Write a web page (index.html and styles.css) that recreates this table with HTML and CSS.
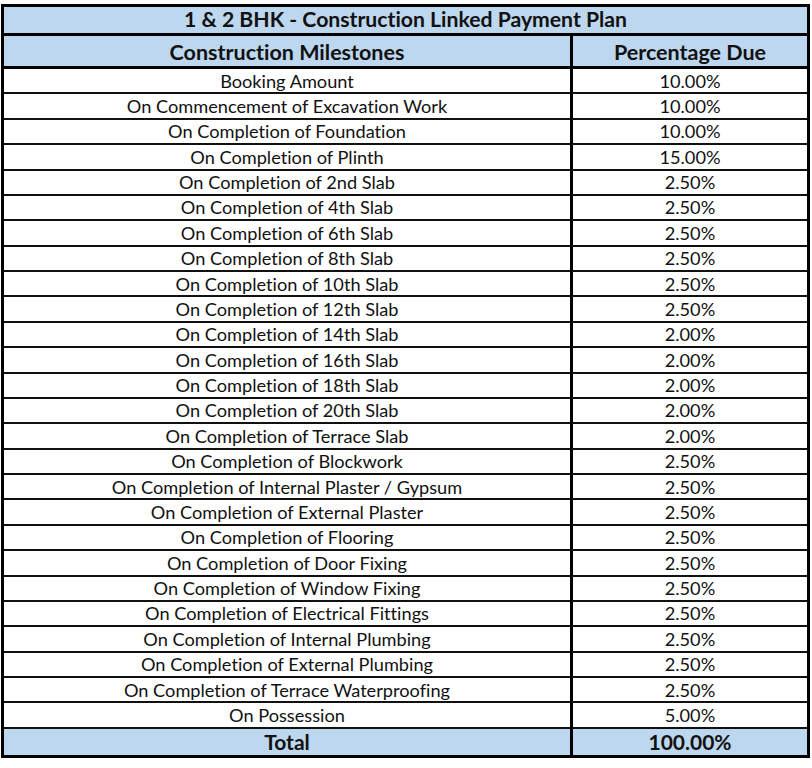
FILE: index.html
```html
<!DOCTYPE html>
<html lang="en">
<head>
<meta charset="utf-8">
<title>1 &amp; 2 BHK - Construction Linked Payment Plan</title>
<link rel="stylesheet" href="styles.css">
</head>
<body>
<table class="plan">
  <colgroup><col class="col-milestone"><col class="col-pct"></colgroup>
  <thead>
    <tr class="title-row"><th colspan="2">1 &amp; 2 BHK - Construction Linked Payment Plan</th></tr>
    <tr class="head-row"><th>Construction Milestones</th><th class="pct">Percentage Due</th></tr>
  </thead>
  <tbody>
    <tr><td>Booking Amount</td><td class="pct">10.00%</td></tr>
    <tr><td>On Commencement of Excavation Work</td><td class="pct">10.00%</td></tr>
    <tr><td>On Completion of Foundation</td><td class="pct">10.00%</td></tr>
    <tr><td>On Completion of Plinth</td><td class="pct">15.00%</td></tr>
    <tr><td>On Completion of 2nd Slab</td><td class="pct">2.50%</td></tr>
    <tr><td>On Completion of 4th Slab</td><td class="pct">2.50%</td></tr>
    <tr><td>On Completion of 6th Slab</td><td class="pct">2.50%</td></tr>
    <tr><td>On Completion of 8th Slab</td><td class="pct">2.50%</td></tr>
    <tr><td>On Completion of 10th Slab</td><td class="pct">2.50%</td></tr>
    <tr><td>On Completion of 12th Slab</td><td class="pct">2.50%</td></tr>
    <tr><td>On Completion of 14th Slab</td><td class="pct">2.00%</td></tr>
    <tr><td>On Completion of 16th Slab</td><td class="pct">2.00%</td></tr>
    <tr><td>On Completion of 18th Slab</td><td class="pct">2.00%</td></tr>
    <tr><td>On Completion of 20th Slab</td><td class="pct">2.00%</td></tr>
    <tr><td>On Completion of Terrace Slab</td><td class="pct">2.00%</td></tr>
    <tr><td>On Completion of Blockwork</td><td class="pct">2.50%</td></tr>
    <tr><td>On Completion of Internal Plaster / Gypsum</td><td class="pct">2.50%</td></tr>
    <tr><td>On Completion of External Plaster</td><td class="pct">2.50%</td></tr>
    <tr><td>On Completion of Flooring</td><td class="pct">2.50%</td></tr>
    <tr><td>On Completion of Door Fixing</td><td class="pct">2.50%</td></tr>
    <tr><td>On Completion of Window Fixing</td><td class="pct">2.50%</td></tr>
    <tr><td>On Completion of Electrical Fittings</td><td class="pct">2.50%</td></tr>
    <tr><td>On Completion of Internal Plumbing</td><td class="pct">2.50%</td></tr>
    <tr><td>On Completion of External Plumbing</td><td class="pct">2.50%</td></tr>
    <tr><td>On Completion of Terrace Waterproofing</td><td class="pct">2.50%</td></tr>
    <tr><td>On Possession</td><td class="pct">5.00%</td></tr>
  </tbody>
  <tfoot>
    <tr class="total-row"><th>Total</th><th class="pct">100.00%</th></tr>
  </tfoot>
</table>
</body>
</html>
```

FILE: styles.css
```css
html, body {
  margin: 0;
  background: #ffffff;
}

body {
  padding: 4px 0 0 1px;
  font-family: Lato, "Open Sans", "Liberation Sans", sans-serif;
  font-variant-ligatures: none;
  color: #111111;
}

.plan {
  width: 809px;
  table-layout: fixed;
  border-collapse: separate;
  border-spacing: 0;
  border: 3px solid #000000;
}

.col-milestone { width: 566px; }
.col-pct { width: 237px; }

.plan th,
.plan td {
  padding: 0;
  text-align: center;
  vertical-align: middle;
  white-space: nowrap;
  line-height: 1;
}

.plan td {
  font-size: 18.2px;
  font-weight: 400;
  height: 23.38px;
  border-bottom: 2px solid #111111;
}

.plan .pct {
  border-left: 3px solid #000000;
}

.title-row th {
  height: 26px;
  font-size: 21.2px;
  font-weight: 700;
  background: #bdd7ee;
  border-bottom: 3px solid #000000;
}

.head-row th {
  height: 27px;
  padding-top: 3px;
  font-size: 21.5px;
  font-weight: 700;
  background: #bdd7ee;
  border-bottom: 3px solid #000000;
}

.total-row th {
  height: 26px;
  font-size: 21px;
  font-weight: 700;
  background: #bdd7ee;
}
```
